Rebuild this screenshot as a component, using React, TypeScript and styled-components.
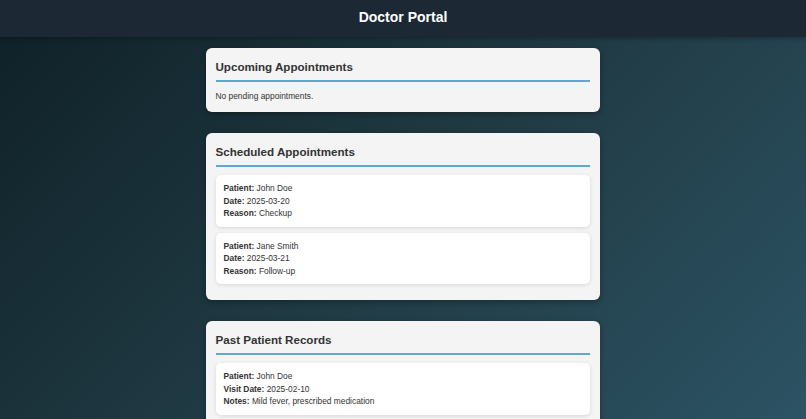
import React from "react";
import styled, { createGlobalStyle } from "styled-components";

const GlobalStyle = createGlobalStyle`
  * {
    box-sizing: border-box;
  }

  html,
  body {
    margin: 0;
    padding: 0;
    min-height: 100%;
  }

  body {
    font-family: "Liberation Sans", Arial, sans-serif;
    background: linear-gradient(135deg, #0f2027 0%, #203a43 50%, #2c5364 100%);
    background-attachment: fixed;
    min-height: 100vh;
    color: #333;
  }
`;

type Appointment = { patient: string; date: string; reason: string };
type PastRecord = { patient: string; visitDate: string; notes: string };

const scheduled: Appointment[] = [
  { patient: "John Doe", date: "2025-03-20", reason: "Checkup" },
  { patient: "Jane Smith", date: "2025-03-21", reason: "Follow-up" },
];

const records: PastRecord[] = [
  { patient: "John Doe", visitDate: "2025-02-10", notes: "Mild fever, prescribed medication" },
];

const App = () => {
  return (
    <>
      <GlobalStyle />
      <Header>
        <h1>Doctor Portal</h1>
      </Header>
      <Main>
        <Section>
          <Title>Upcoming Appointments</Title>
          <Empty>No pending appointments.</Empty>
        </Section>

        <Section>
          <Title>Scheduled Appointments</Title>
          {scheduled.map((a) => (
            <Item key={a.patient + a.date}>
              <Line>
                <b>Patient:</b> {a.patient}
              </Line>
              <Line>
                <b>Date:</b> {a.date}
              </Line>
              <Line>
                <b>Reason:</b> {a.reason}
              </Line>
            </Item>
          ))}
        </Section>

        <Section>
          <Title>Past Patient Records</Title>
          {records.map((r) => (
            <Item key={r.patient + r.visitDate}>
              <Line>
                <b>Patient:</b> {r.patient}
              </Line>
              <Line>
                <b>Visit Date:</b> {r.visitDate}
              </Line>
              <Line>
                <b>Notes:</b> {r.notes}
              </Line>
            </Item>
          ))}
        </Section>
      </Main>
    </>
  );
};

const Header = styled.header`
  height: 37px;
  padding-bottom: 4px;
  display: flex;
  align-items: center;
  justify-content: center;
  background: #1d2835;
  box-shadow: 0 2px 4px rgba(0, 0, 0, 0.25);

  h1 {
    margin: 0;
    font-size: 14px;
    font-weight: bold;
    color: #ffffff;
  }
`;

const Main = styled.main`
  display: flex;
  flex-direction: column;
  align-items: center;
  gap: 21px;
  padding: 11px 0 20px;
`;

const Section = styled.section`
  width: 394px;
  margin-left: -1px;
  background: #f4f4f4;
  border-radius: 6px;
  padding: 10px;
  box-shadow: 0 2px 6px rgba(0, 0, 0, 0.3);
`;

const Title = styled.h2`
  margin: 0 0 8px;
  padding: 1px 0 6px;
  font-size: 11.6px;
  line-height: 15px;
  font-weight: bold;
  color: #333;
  border-bottom: 2px solid #5fa8d3;
`;

const Empty = styled.p`
  margin: 0;
  font-size: 8.4px;
  line-height: 12px;
  color: #333;
`;

const Item = styled.div`
  background: #ffffff;
  border-radius: 5px;
  padding: 7px 8px;
  margin-bottom: 6px;
  box-shadow: 0 1px 4px rgba(0, 0, 0, 0.12);
`;

const Line = styled.p`
  margin: 0;
  font-size: 8.4px;
  line-height: 12.5px;
  color: #333;

  b {
    font-weight: bold;
  }
`;

export default App;
